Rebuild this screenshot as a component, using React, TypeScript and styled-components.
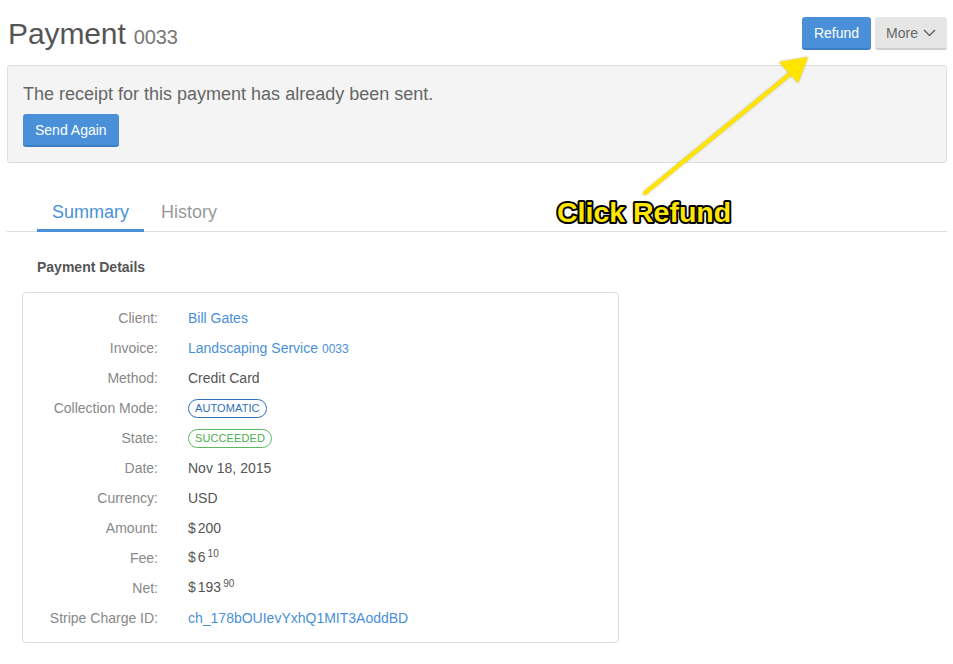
import React from "react";
import styled, { createGlobalStyle } from "styled-components";

const GlobalStyle = createGlobalStyle`
  html, body { margin: 0; padding: 0; background: #fff; }
  body { font-family: "Liberation Sans", Arial, Helvetica, sans-serif; color: #555; }
  * { box-sizing: border-box; }
`;

const Page = styled.div`
  position: relative;
  width: 953px;
  height: 664px;
  padding: 0 6px 0 7px;
  overflow: hidden;
`;

const Header = styled.header`
  display: flex;
  justify-content: space-between;
  align-items: flex-start;
  height: 65px;
  padding-top: 16px;
`;

const Title = styled.h1`
  margin: 0;
  font-size: 30px;
  line-height: 36px;
  font-weight: 400;
  color: #555;
  letter-spacing: -0.1px;
  padding-left: 1px;
`;

const TitleNumber = styled.span`
  font-size: 20px;
  color: #777;
  margin-left: 8px;
`;

const Actions = styled.div`
  display: flex;
  gap: 4px;
  margin-top: 1px;
`;

const Button = styled.button<{ $variant?: "primary" | "default" }>`
  display: inline-flex;
  align-items: center;
  justify-content: center;
  gap: 5px;
  height: 33px;
  padding: 0 ${(p) => (p.$variant === "default" ? "11px" : "12px")};
  border: 0;
  border-radius: 3px;
  font-family: inherit;
  font-size: 14px;
  cursor: pointer;
  background: ${(p) => (p.$variant === "default" ? "#e6e6e6" : "#4a90d9")};
  color: ${(p) => (p.$variant === "default" ? "#666" : "#fff")};
  border-bottom: 2px solid ${(p) => (p.$variant === "default" ? "#cfcfcf" : "#3c7fc6")};
`;

const Alert = styled.div`
  background: #f4f4f4;
  border: 1px solid #ddd;
  border-radius: 3px;
  padding: 16px 15px 15px;
`;

const AlertText = styled.p`
  margin: 0 0 8px;
  font-size: 18px;
  line-height: 24px;
  color: #666;
`;

const Tabs = styled.nav`
  display: flex;
  gap: 2px;
  margin-top: 37px;
  padding-left: 30px;
  border-bottom: 1px solid #ddd;
`;

const Tab = styled.div<{ $active?: boolean }>`
  padding: 0 15px 5px;
  font-size: 18px;
  line-height: 24px;
  color: ${(p) => (p.$active ? "#4a90d9" : "#999")};
  border-bottom: 3px solid ${(p) => (p.$active ? "#4a90d9" : "transparent")};
  margin-bottom: -1px;
`;

const Section = styled.section`
  padding-left: 15px;
`;

const SectionTitle = styled.h3`
  margin: 25px 0 15px 15px;
  font-size: 14px;
  line-height: 20px;
  font-weight: 700;
  color: #555;
`;

const Card = styled.div`
  width: 597px;
  border: 1px solid #ddd;
  border-radius: 4px;
  padding: 10px 0 9px;
  display: grid;
  grid-template-columns: 135px 1fr;
  column-gap: 30px;
  grid-auto-rows: 30px;
  font-size: 14px;
  align-items: center;
`;

const Label = styled.div`
  text-align: right;
  color: #888;
  line-height: 30px;
`;

const Value = styled.div`
  color: #555;
  line-height: 30px;
  display: flex;
  align-items: center;
`;

const Link = styled.a`
  color: #4a90d9;
  text-decoration: none;
`;

const Small = styled.span`
  font-size: 12px;
  margin-left: 4px;
`;

const Badge = styled.span<{ $tone: "blue" | "green" }>`
  display: inline-block;
  height: 19px;
  line-height: 17px;
  padding: 0 6px;
  border-radius: 10px;
  font-size: 11px;
  letter-spacing: 0.1px;
  border: 1px solid ${(p) => (p.$tone === "blue" ? "#2e70b8" : "#5cb85c")};
  color: ${(p) => (p.$tone === "blue" ? "#2e70b8" : "#4cae4c")};
`;

const Currency = styled.span`
  margin-right: 2px;
`;

const Cents = styled.span`
  font-size: 10px;
  margin-left: 2px;
  position: relative;
  top: -5px;
`;

const Annotation = styled.svg`
  position: absolute;
  left: 0;
  top: 0;
  pointer-events: none;
  overflow: visible;
`;

const Money: React.FC<{ whole: string; cents?: string }> = ({ whole, cents }) => (
  <span>
    <Currency>$</Currency>
    {whole}
    {cents && <Cents>{cents}</Cents>}
  </span>
);

const rows: { label: string; value: React.ReactNode }[] = [
  { label: "Client:", value: <Link>Bill Gates</Link> },
  {
    label: "Invoice:",
    value: (
      <Link>
        Landscaping Service<Small>0033</Small>
      </Link>
    ),
  },
  { label: "Method:", value: "Credit Card" },
  { label: "Collection Mode:", value: <Badge $tone="blue">AUTOMATIC</Badge> },
  { label: "State:", value: <Badge $tone="green">SUCCEEDED</Badge> },
  { label: "Date:", value: "Nov 18, 2015" },
  { label: "Currency:", value: "USD" },
  { label: "Amount:", value: <Money whole="200" /> },
  { label: "Fee:", value: <Money whole="6" cents="10" /> },
  { label: "Net:", value: <Money whole="193" cents="90" /> },
  { label: "Stripe Charge ID:", value: <Link>ch_178bOUIevYxhQ1MIT3AoddBD</Link> },
];

export default function App() {
  return (
    <>
      <GlobalStyle />
      <Page>
        <Header>
          <Title>
            Payment<TitleNumber>0033</TitleNumber>
          </Title>
          <Actions>
            <Button $variant="primary">Refund</Button>
            <Button $variant="default">
              More
              <svg width="13" height="8" viewBox="0 0 13 8" fill="none">
                <polyline points="1,1 6.5,6.5 12,1" stroke="#666" strokeWidth="1.5" />
              </svg>
            </Button>
          </Actions>
        </Header>
        <Alert>
          <AlertText>The receipt for this payment has already been sent.</AlertText>
          <Button $variant="primary">Send Again</Button>
        </Alert>
        <Tabs>
          <Tab $active>Summary</Tab>
          <Tab>History</Tab>
        </Tabs>
        <Section>
          <SectionTitle>Payment Details</SectionTitle>
          <Card>
            {rows.map((r) => (
              <React.Fragment key={r.label}>
                <Label>{r.label}</Label>
                <Value>{r.value}</Value>
              </React.Fragment>
            ))}
          </Card>
        </Section>
        <Annotation width="953" height="664" viewBox="0 0 953 664">
          <defs>
            <filter id="sh" x="-10%" y="-10%" width="120%" height="120%">
              <feDropShadow dx="0" dy="0" stdDeviation="0.8" floodColor="#8a7a00" floodOpacity="0.6" />
            </filter>
          </defs>
          <g filter="url(#sh)">
            <line x1="645" y1="193" x2="790" y2="74" stroke="#ffe400" strokeWidth="4" strokeLinecap="round" />
            <polygon points="808,57 779,62 798,83" fill="#ffe400" />
          </g>
          <text
            x="557"
            y="222"
            fontFamily="'Liberation Sans', Arial, sans-serif"
            fontWeight="700"
            fontSize="28.5"
            fill="#ffe600"
            stroke="#000"
            strokeWidth="4"
            strokeLinejoin="round"
            paintOrder="stroke"
          >
            Click Refund
          </text>
        </Annotation>
      </Page>
    </>
  );
}
